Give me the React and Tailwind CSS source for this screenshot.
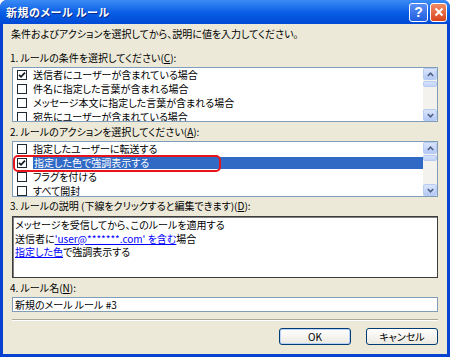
import React from "react";

const font = "font-['Noto_Sans_CJK_JP',sans-serif] [font-feature-settings:'palt']";

function Check({ checked }) {
  return (
    <span className="w-[10px] h-[10px] border border-[#1e2a36] bg-white flex items-center justify-center shrink-0">
      {checked && (
        <svg width="8" height="8" viewBox="0 0 8 8">
          <path d="M1 3.8 L3 5.8 L7 1.6" stroke="#0e1a22" strokeWidth="1.7" fill="none" />
        </svg>
      )}
    </span>
  );
}

function Arrow({ up }) {
  return (
    <svg width="7" height="5" viewBox="0 0 7 5">
      <path d={up ? "M0.8 4 L3.5 1.2 L6.2 4" : "M0.8 1 L3.5 3.8 L6.2 1"} stroke="#4d6185" strokeWidth="1.6" fill="none" />
    </svg>
  );
}

function ScrollBar() {
  return (
    <div className="w-[14px] shrink-0 flex flex-col bg-[#f4f2ec]">
      <div className="h-[12px] rounded-[2px] border border-[#b8cbf3] bg-gradient-to-b from-[#dbe5fc] to-[#b5c9f6] flex items-center justify-center">
        <Arrow up />
      </div>
      <div className="mt-[1px] h-[6px] rounded-[2px] border border-[#b8cbf3] bg-gradient-to-b from-[#d6e1fb] to-[#c2d3f8]" />
      <div className="flex-1" />
      <div className="h-[12px] rounded-[2px] border border-[#b8cbf3] bg-gradient-to-b from-[#dbe5fc] to-[#b5c9f6] flex items-center justify-center">
        <Arrow />
      </div>
    </div>
  );
}

function Row({ text, checked, selected }) {
  return (
    <div className="h-[14px] flex items-center pl-[4px] shrink-0">
      <Check checked={checked} />
      {selected ? (
        <span className="ml-[6px] flex-1 h-[12px] bg-[#316ac5] text-white leading-[12px] pl-[1px] whitespace-nowrap">{text}</span>
      ) : (
        <span className="ml-[6px] leading-[14px] whitespace-nowrap">{text}</span>
      )}
    </div>
  );
}

export default function App() {
  return (
    <div className={`w-[450px] h-[357px] flex flex-col bg-[#0842d0] rounded-t-[7px] overflow-hidden text-[10px] text-black ${font}`}>
      {/* title bar */}
      <div className="h-[24px] shrink-0 flex items-center pl-[6px] pr-[3px] bg-gradient-to-b from-[#3b8cf5] via-[#0b5fe6] to-[#0049d6]">
        <span className="text-white font-bold text-[11px] tracking-[0.5px] [text-shadow:1px_1px_0_#0a2a8a] flex-1">新規のメール ルール</span>
        <div className="w-[19px] h-[19px] rounded-[3px] border border-white bg-gradient-to-b from-[#5a8ef5] to-[#1f5ddf] flex items-center justify-center text-white font-bold text-[14px] leading-none font-['Liberation_Sans',sans-serif]">?</div>
        <div className="ml-[2px] w-[17px] h-[19px] rounded-[3px] border border-white bg-gradient-to-b from-[#f08a63] to-[#d9421a] flex items-center justify-center">
          <svg width="10" height="10" viewBox="0 0 10 10">
            <path d="M1.5 1.5 L8.5 8.5 M8.5 1.5 L1.5 8.5" stroke="white" strokeWidth="2" />
          </svg>
        </div>
      </div>

      {/* body */}
      <div className="flex-1 mx-[3px] mb-[3px] bg-[#ece9d8] flex flex-col pl-[9px] pr-[9px]">
        <div className="mt-[3px] h-[14px] leading-[14px] -ml-[1px] whitespace-nowrap">条件およびアクションを選択してから、説明に値を入力してください。</div>

        <div className="mt-[10px] h-[14px] leading-[14px] -ml-[2px] whitespace-nowrap">
          1. ルールの条件を選択してください(<span className="underline">C</span>):
        </div>
        <div className="mt-[2px] h-[55px] border border-[#7f9db9] bg-white flex overflow-hidden">
          <div className="flex-1 flex flex-col overflow-hidden">
            <Row checked text="送信者にユーザーが含まれている場合" />
            <Row text="件名に指定した言葉が含まれる場合" />
            <Row text="メッセージ本文に指定した言葉が含まれる場合" />
            <Row text="宛先にユーザーが含まれている場合" />
          </div>
          <ScrollBar />
        </div>

        <div className="mt-[3px] h-[14px] leading-[14px] -ml-[2px] whitespace-nowrap">
          2. ルールのアクションを選択してください(<span className="underline">A</span>):
        </div>
        <div className="mt-[2px] relative">
          <div className="h-[56px] border border-[#7f9db9] bg-white flex overflow-hidden">
            <div className="flex-1 flex flex-col overflow-hidden">
              <Row text="指定したユーザーに転送する" />
              <Row checked selected text="指定した色で強調表示する" />
              <Row text="フラグを付ける" />
              <Row text="すべて開封" />
            </div>
            <ScrollBar />
          </div>
          <div className="absolute left-[1px] top-[14px] w-[208px] h-[17px] border-2 border-[#e8141b] rounded-[5px]" />
        </div>

        <div className="mt-[2px] h-[14px] leading-[14px] -ml-[2px] whitespace-nowrap">
          3. ルールの説明 (下線をクリックすると編集できます)(<span className="underline">D</span>):
        </div>
        <div className="mt-[3px] h-[62px] border border-[#3c3c3c] shadow-[inset_1px_1px_0_#808080] bg-white pt-[1px] pl-[2px] leading-[13.5px]">
          <div className="whitespace-nowrap">メッセージを受信してから、このルールを適用する</div>
          <div className="whitespace-nowrap">
            送信者に<span className="text-[#0000ff] underline">'user@*******.com' を含む</span>場合
          </div>
          <div className="whitespace-nowrap">
            <span className="text-[#0000ff] underline">指定した色</span>で強調表示する
          </div>
        </div>

        <div className="mt-[3px] h-[14px] leading-[14px] -ml-[2px] whitespace-nowrap">
          4. ルール名(<span className="underline">N</span>):
        </div>
        <div className="mt-[2px] h-[15px] border border-[#7f9db9] bg-white pl-[2px] leading-[13px] whitespace-nowrap">新規のメール ルール #3</div>

        <div className="mt-[7px] h-[2px] border-t border-[#aca899] border-b border-b-white" />

        <div className="mt-[7px] flex justify-end gap-[15px]">
          <div className="w-[72px] h-[17px] rounded-[3px] border border-[#003c74] bg-gradient-to-b from-[#ffffff] to-[#ebe9e0] shadow-[inset_0_0_0_1px_#b9d1f8] flex items-center justify-center leading-none">OK</div>
          <div className="w-[72px] h-[17px] rounded-[3px] border border-[#003c74] bg-gradient-to-b from-[#ffffff] to-[#ebe9e0] flex items-center justify-center leading-none">キャンセル</div>
        </div>
      </div>
    </div>
  );
}
